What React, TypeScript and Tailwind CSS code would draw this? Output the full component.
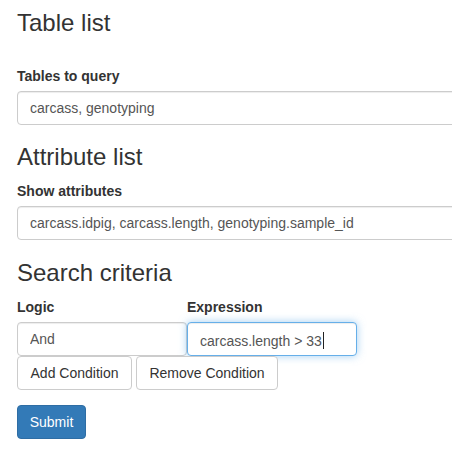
import React from 'react';

const inputShape =
  'block h-[34px] rounded-[4px] border bg-white px-[12px] py-[6px] text-[14px] leading-[20px] text-[#555] outline-none';
const inputIdle = `${inputShape} border-[#ccc] shadow-[inset_0_1px_1px_rgba(0,0,0,0.075)]`;
const inputFocus = `${inputShape} border-[#66afe9] shadow-[inset_0_1px_1px_rgba(0,0,0,0.075),0_0_8px_rgba(102,175,233,0.6)]`;

const btnDefault =
  'h-[34px] rounded-[4px] border border-[#ccc] bg-white px-[12px] py-[6px] text-[14px] leading-[20px] text-[#333]';

function Label({ children }: { children: React.ReactNode }) {
  return <div className="mb-[5px] text-[14px] font-bold leading-[20px] text-[#333]">{children}</div>;
}

export default function App() {
  return (
    <div className="h-[450px] w-full overflow-hidden bg-white pl-[17px] pt-[10px] font-['Liberation_Sans',Arial,sans-serif] text-[14px] text-[#333]">
      <h3 className="mb-[30px] text-[24px] font-normal leading-[26px]">Table list</h3>
      <Label>Tables to query</Label>
      <input readOnly className={`${inputIdle} w-[520px]`} value="carcass, genotyping" />

      <h3 className="mb-[11px] mt-[19px] text-[24px] font-normal leading-[26px]">Attribute list</h3>
      <Label>Show attributes</Label>
      <input
        readOnly
        className={`${inputIdle} w-[520px]`}
        value="carcass.idpig, carcass.length, genotyping.sample_id"
      />

      <h3 className="mb-[11px] mt-[20px] text-[24px] font-normal leading-[26px]">Search criteria</h3>
      <div className="flex">
        <div className="w-[170px]">
          <Label>Logic</Label>
          <input readOnly className={`${inputIdle} w-[170px]`} value="And" />
        </div>
        <div className="w-[170px]">
          <Label>Expression</Label>
          <div className={`${inputFocus} w-[170px] whitespace-nowrap`}>
            carcass.length &gt; 33
            <span className="ml-px inline-block h-[17px] w-px translate-y-[3px] bg-[#222]" />
          </div>
        </div>
      </div>
      <div className="flex gap-[4px]">
        <button className={`${btnDefault} w-[115px]`}>Add Condition</button>
        <button className={`${btnDefault} w-[142px]`}>Remove Condition</button>
      </div>

      <button className="mt-[15px] h-[34px] w-[69px] rounded-[4px] border border-[#2e6da4] bg-[#337ab7] py-[6px] text-[14px] leading-[20px] text-white">
        Submit
      </button>
    </div>
  );
}
